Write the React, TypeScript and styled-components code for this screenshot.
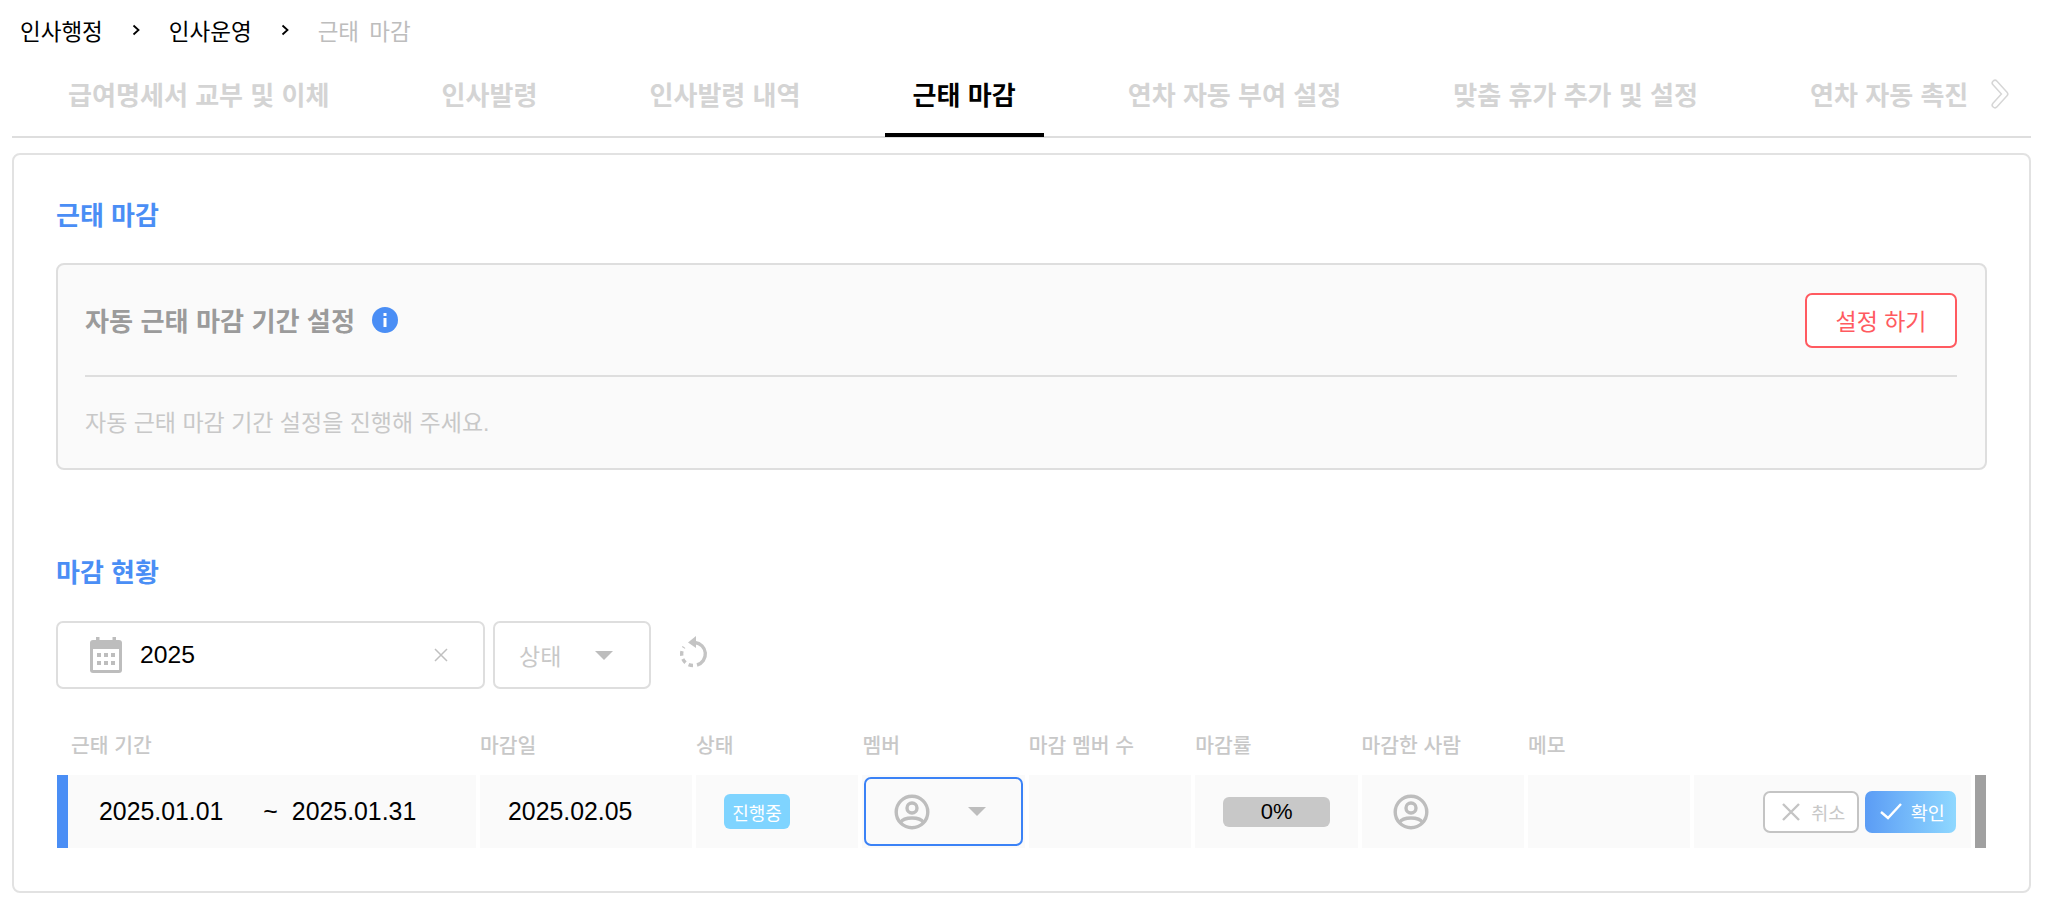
import React from 'react';
import styled, { createGlobalStyle } from 'styled-components';

const GlobalStyle = createGlobalStyle`
  html, body {
    margin: 0;
    padding: 0;
    background: #fff;
  }

  body {
    font-family: 'Liberation Sans', 'Noto Sans CJK KR', sans-serif;
    color: #000;
  }

  * {
    box-sizing: border-box;
  }
`;

const Page = styled.div`
  width: 2048px;
  padding: 0 17px 0 12px;
`;

const Breadcrumb = styled.nav`
  display: flex;
  align-items: center;
  height: 60px;
  padding-left: 8px;
  font-size: 22.5px;
  word-spacing: 4px;
`;

const Crumb = styled.span<{ $current?: boolean }>`
  color: ${(props) => (props.$current ? '#bdbdbd' : '#000')};
`;

const CrumbArrow = styled.svg`
  width: 8px;
  height: 12px;
  margin: 0 29px 0 29px;
`;

const TabBar = styled.div`
  position: relative;
  height: 78px;
  border-bottom: 2px solid #dedede;
`;

const TabList = styled.div`
  display: flex;
  gap: 56px;
  width: 1968px;
  height: 77px;
  padding-left: 28px;
  overflow: hidden;
`;

const Tab = styled.div<{ $active?: boolean }>`
  flex: none;
  height: 77px;
  padding: 21px 28px 0;
  font-size: 26.07px;
  line-height: 30px;
  font-weight: 700;
  white-space: nowrap;
  color: ${(props) => (props.$active ? '#000' : '#d4d4d4')};
  border-bottom: 4px solid ${(props) => (props.$active ? '#000' : 'transparent')};
`;

const TabArrow = styled.svg`
  position: absolute;
  top: 18px;
  left: 1976px;
  width: 24px;
  height: 32px;
`;

const Card = styled.section`
  margin-top: 15px;
  padding: 46px 42px 43px;
  border: 2px solid #e2e2e2;
  border-radius: 8px;
`;

const SectionTitle = styled.h2`
  margin: 0;
  font-size: 26px;
  line-height: 30px;
  font-weight: 700;
  color: #4a8ef5;
`;

const SettingPanel = styled.div`
  height: 207px;
  margin-top: 32px;
  padding: 0 28px 0 27px;
  background: #fafafa;
  border: 2px solid #dedede;
  border-radius: 8px;
`;

const PanelHeader = styled.div`
  display: flex;
  justify-content: space-between;
  align-items: center;
  height: 112px;
  border-bottom: 2px solid #dedede;
`;

const PanelTitle = styled.div`
  display: flex;
  align-items: center;
  gap: 17px;
  font-size: 26.2px;
  font-weight: 700;
  color: #9b9b9b;
`;

const InfoBadge = styled.span`
  display: flex;
  justify-content: center;
  align-items: center;
  width: 26px;
  height: 26px;
  border-radius: 50%;
  background: #4a8ef5;
`;

const SettingButton = styled.button`
  width: 152px;
  height: 55px;
  padding: 0;
  font-family: inherit;
  font-size: 23px;
  color: #ff5a60;
  background: #fff;
  border: 2px solid #ff5a60;
  border-radius: 7px;
`;

const PanelText = styled.p`
  margin: 0;
  padding-top: 31px;
  font-size: 23px;
  line-height: 30px;
  color: #c8c8c8;
`;

const StatusSection = styled.div`
  margin-top: 88px;
`;

const Filters = styled.div`
  display: flex;
  align-items: center;
  gap: 8px;
  height: 68px;
  margin-top: 33px;
`;

const FilterBox = styled.div`
  display: flex;
  align-items: center;
  height: 68px;
  background: #fff;
  border: 2px solid #dedede;
  border-radius: 7px;
`;

const DateBox = styled(FilterBox)`
  width: 429px;
  padding: 0 35px 0 32px;
  font-size: 24.7px;
`;

const DateValue = styled.span`
  flex: 1;
  margin-left: 18px;
`;

const StatusBox = styled(FilterBox)`
  width: 158px;
  padding-left: 24px;
  font-size: 23px;
  color: #c8c8c8;
`;

const Caret = styled.span<{ $gap: number }>`
  width: 0;
  height: 0;
  margin-left: ${(props) => props.$gap}px;
  border-left: 9px solid transparent;
  border-right: 9px solid transparent;
  border-top: 9px solid #bdbdbd;
`;

const ResetIcon = styled.svg`
  width: 30px;
  height: 34px;
  margin: -8px 0 0 20px;
`;

const TableGrid = styled.div`
  display: grid;
  grid-template-columns: 419px 212px repeat(6, 162.4px) 277px 11px;
  column-gap: 4px;
  margin-left: 1px;
`;

const HeadRow = styled(TableGrid)`
  margin-top: 42px;
  margin-bottom: 14px;
`;

const HeadCell = styled.div<{ $first?: boolean }>`
  padding-left: ${(props) => (props.$first ? '14px' : '0')};
  font-size: 20.4px;
  line-height: 30px;
  font-weight: 500;
  color: #c8c8c8;
  white-space: nowrap;
`;

const BodyRow = styled(TableGrid)`
  height: 73px;
`;

const Cell = styled.div<{ $pad?: number }>`
  display: flex;
  align-items: center;
  padding-left: ${(props) => props.$pad ?? 28}px;
  background: #fafafa;
  font-size: 24.85px;
`;

const PeriodCell = styled(Cell)`
  padding-left: 31px;
  border-left: 11px solid #4a8ef5;
`;

const Tilde = styled.span`
  margin: 0 14px 0 40px;
`;

const StatusBadge = styled.span`
  display: flex;
  justify-content: center;
  align-items: center;
  width: 66px;
  height: 35px;
  font-size: 18px;
  color: #fff;
  background: #7fd4ff;
  border-radius: 6px;
`;

const MemberCell = styled(Cell)`
  padding: 2px;
`;

const MemberSelect = styled.div`
  display: flex;
  align-items: center;
  width: 100%;
  height: 69px;
  padding-left: 28px;
  border: 2px solid #3b82f6;
  border-radius: 7px;
`;

const Avatar = styled.svg`
  width: 36px;
  height: 36px;
`;

const Progress = styled.div`
  display: flex;
  justify-content: center;
  align-items: center;
  width: 107px;
  height: 30px;
  font-size: 22px;
  background: #c8c8c8;
  border-radius: 6px;
`;

const ActionCell = styled(Cell)`
  justify-content: flex-end;
  gap: 6px;
  padding: 0 15px 0 0;
`;

const ActionButton = styled.button<{ $primary?: boolean }>`
  display: flex;
  justify-content: center;
  align-items: center;
  gap: ${(props) => (props.$primary ? '9px' : '11px')};
  height: 42px;
  padding: ${(props) => (props.$primary ? '0 0 0 3px' : '0 0 0 5px')};
  font-family: inherit;
  font-size: 18.5px;
  color: ${(props) => (props.$primary ? '#fff' : '#c8c8c8')};
  background: ${(props) => (props.$primary ? 'linear-gradient(90deg, #5b9cf5, #8fd8ff)' : '#fff')};
  border: ${(props) => (props.$primary ? 'none' : '2px solid #c4c4c4')};
  border-radius: 7px;
  width: ${(props) => (props.$primary ? '91px' : '96px')};
`;

const EndBar = styled.div`
  background: #a0a0a0;
`;

const tabs = [
  '급여명세서 교부 및 이체',
  '인사발령',
  '인사발령 내역',
  '근태 마감',
  '연차 자동 부여 설정',
  '맞춤 휴가 추가 및 설정',
  '연차 자동 촉진',
];

const columns = ['근태 기간', '마감일', '상태', '멤버', '마감 멤버 수', '마감률', '마감한 사람', '메모'];

const UserIcon = () => (
  <Avatar viewBox="0 0 36 36" fill="none" stroke="#bdbdbd" strokeWidth="3.4">
    <circle cx="18" cy="18" r="15.8" />
    <circle cx="18" cy="14" r="5" />
    <path d="M6.5 28.5C10 22.5 26 22.5 29.5 28.5" />
  </Avatar>
);

const Arrow = () => (
  <CrumbArrow viewBox="0 0 8 12" fill="none" stroke="#000" strokeWidth="1.8">
    <path d="M1.5 1.5L6.5 6L1.5 10.5" />
  </CrumbArrow>
);

const App: React.FC = () => {
  return (
    <Page>
      <GlobalStyle />
      <Breadcrumb>
        <Crumb>인사행정</Crumb>
        <Arrow />
        <Crumb>인사운영</Crumb>
        <Arrow />
        <Crumb $current>근태 마감</Crumb>
      </Breadcrumb>

      <TabBar>
        <TabList>
          {tabs.map((tab) => (
            <Tab key={tab} $active={tab === '근태 마감'}>
              {tab}
            </Tab>
          ))}
        </TabList>
        <TabArrow viewBox="0 0 24 32" fill="none" strokeLinecap="round" strokeLinejoin="round">
          <path d="M7 5L17 16L7 27" stroke="#d6d6d6" strokeWidth="7" />
          <path d="M7 5L17 16L7 27" stroke="#fff" strokeWidth="4" />
        </TabArrow>
      </TabBar>

      <Card>
        <SectionTitle>근태 마감</SectionTitle>
        <SettingPanel>
          <PanelHeader>
            <PanelTitle>
              자동 근태 마감 기간 설정
              <InfoBadge>
                <svg width="4" height="14" viewBox="0 0 4 14" fill="#fff">
                  <rect x="0.5" y="0" width="3" height="3" />
                  <rect x="0.5" y="5" width="3" height="9" />
                </svg>
              </InfoBadge>
            </PanelTitle>
            <SettingButton>설정 하기</SettingButton>
          </PanelHeader>
          <PanelText>자동 근태 마감 기간 설정을 진행해 주세요.</PanelText>
        </SettingPanel>

        <StatusSection>
          <SectionTitle>마감 현황</SectionTitle>
          <Filters>
            <DateBox>
              <svg width="32" height="36" viewBox="0 0 32 36">
                <rect x="6" y="0" width="3.5" height="7" fill="#bdbdbd" />
                <rect x="22.5" y="0" width="3.5" height="7" fill="#bdbdbd" />
                <rect x="0" y="3" width="32" height="33" rx="3" fill="#bdbdbd" />
                <rect x="3" y="12" width="26" height="21" fill="#fff" />
                {[7, 14, 21].map((x) =>
                  [16, 24].map((y) => <rect key={`${x}-${y}`} x={x} y={y} width="4" height="4" fill="#bdbdbd" />),
                )}
              </svg>
              <DateValue>2025</DateValue>
              <svg width="14" height="14" viewBox="0 0 14 14" stroke="#c0c0c0" strokeWidth="1.5">
                <path d="M1 1L13 13M13 1L1 13" />
              </svg>
            </DateBox>
            <StatusBox>
              상태
              <Caret $gap={34} />
            </StatusBox>
            <ResetIcon viewBox="0 0 30 34" fill="none" stroke="#c4c4c4" strokeWidth="3.4">
              <path d="M16 8.5A11.5 11.5 0 0 1 18 31" />
              <path d="M14 31.5A11.5 11.5 0 0 1 5 13" strokeDasharray="4.5 3.5" />
              <path d="M17 2V14L9 8.5Z" fill="#c4c4c4" stroke="none" />
            </ResetIcon>
          </Filters>
        </StatusSection>

        <HeadRow>
          {columns.map((column, index) => (
            <HeadCell key={column} $first={index === 0}>
              {column}
            </HeadCell>
          ))}
        </HeadRow>

        <BodyRow>
          <PeriodCell>
            2025.01.01
            <Tilde>~</Tilde>
            2025.01.31
          </PeriodCell>
          <Cell>2025.02.05</Cell>
          <Cell>
            <StatusBadge>진행중</StatusBadge>
          </Cell>
          <MemberCell>
            <MemberSelect>
              <UserIcon />
              <Caret $gap={38} />
            </MemberSelect>
          </MemberCell>
          <Cell />
          <Cell>
            <Progress>0%</Progress>
          </Cell>
          <Cell $pad={31}>
            <UserIcon />
          </Cell>
          <Cell />
          <ActionCell>
            <ActionButton>
              <svg width="18" height="18" viewBox="0 0 18 18" stroke="#c4c4c4" strokeWidth="2.4">
                <path d="M1 1L17 17M17 1L1 17" />
              </svg>
              취소
            </ActionButton>
            <ActionButton $primary>
              <svg width="22" height="17" viewBox="0 0 22 17" fill="none" stroke="#fff" strokeWidth="2.4">
                <path d="M1 9L8 15L21 1" />
              </svg>
              확인
            </ActionButton>
          </ActionCell>
          <EndBar />
        </BodyRow>
      </Card>
    </Page>
  );
};

export default App;
